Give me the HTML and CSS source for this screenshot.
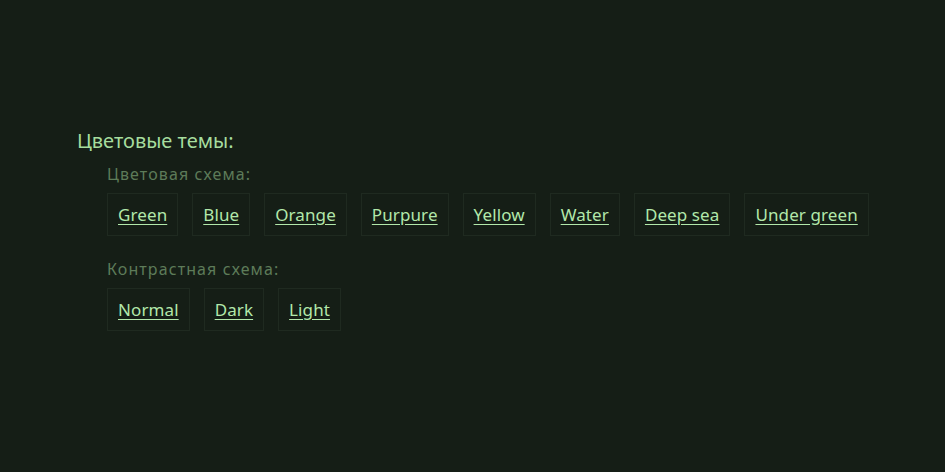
FILE: index.html
```html
<!DOCTYPE html>
<html lang="ru">
<head>
    <meta charset="UTF-8">
    <title>Цветовые темы</title>
    <link rel="stylesheet" href="styles.css">
</head>
<body>
    <div id="themes">
        <h2 class="title">Цветовые темы:</h2>
        <div class="group">
            <p class="label">Цветовая схема:</p>
            <ul class="options">
                <li><a href="#">Green</a></li>
                <li><a href="#">Blue</a></li>
                <li><a href="#">Orange</a></li>
                <li><a href="#">Purpure</a></li>
                <li><a href="#">Yellow</a></li>
                <li><a href="#">Water</a></li>
                <li><a href="#">Deep sea</a></li>
                <li><a href="#">Under green</a></li>
            </ul>
        </div>
        <div class="group">
            <p class="label">Контрастная схема:</p>
            <ul class="options">
                <li><a href="#">Normal</a></li>
                <li><a href="#">Dark</a></li>
                <li><a href="#">Light</a></li>
            </ul>
        </div>
    </div>
</body>
</html>
```
FILE: styles.css
```css
*{
    padding: 0;
    margin: 0;
    box-sizing: border-box;
}
ul{
    list-style: none;
}
body{
    background: #151e16;
    font-family: "Noto Sans", "DejaVu Sans", sans-serif;
    width: 945px;
    height: 472px;
    overflow: hidden;
}
#themes{
    padding: 127px 0 0 77px;
}
.title{
    font-size: 20px;
    font-weight: 400;
    color: #a6dd9e;
    line-height: 28px;
}
.group{
    padding-left: 30px;
    margin-top: 8px;
}
.group + .group{
    margin-top: 22px;
}
.label{
    font-size: 16px;
    letter-spacing: 1.1px;
    color: #5d7b59;
    line-height: 22px;
    margin-bottom: 8px;
}
.options{
    display: flex;
    gap: 14px;
}
.options li{
    height: 43px;
    border: 1px solid #1f2a20;
    padding: 0 10px;
    display: flex;
    align-items: center;
}
.options a{
    font-size: 17px;
    letter-spacing: 0.1px;
    color: #b2e8aa;
    text-decoration: underline;
    text-underline-offset: 3px;
}
```
